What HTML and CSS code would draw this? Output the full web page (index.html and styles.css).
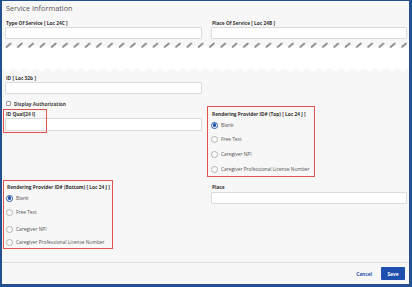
FILE: index.html
```html
<!DOCTYPE html>
<html>
<head>
<meta charset="utf-8">
<link rel="stylesheet" href="styles.css">
</head>
<body>
<div class="frame">
  <div class="content">
    <div class="title">Service Information</div>
    <div class="row2">
      <div class="field">
        <div class="label">Type Of Service [ Loc 24C ]</div>
        <div class="input"></div>
      </div>
      <div class="field">
        <div class="label">Place Of Service [ Loc 24B ]</div>
        <div class="input"></div>
      </div>
    </div>
    <svg class="torn" width="407" height="36" viewBox="0 0 407 36">
      <defs>
        <pattern id="dash" x="3" y="0" width="11.3" height="36" patternUnits="userSpaceOnUse">
          <path d="M1.5 8 L5.5 4.5" stroke="#8c8c8c" stroke-width="1.8" stroke-linecap="round"/>
        </pattern>
        <pattern id="zig" x="0" y="0" width="11.3" height="36" patternUnits="userSpaceOnUse">
          <path d="M0 28.5 L5.65 33 L11.3 28.5 Z" fill="#ffffff"/>
        </pattern>
      </defs>
      <rect x="0" y="7" width="407" height="22" fill="#ffffff"/>
      <rect x="0" y="28" width="407" height="6" fill="url(#zig)"/>
      <rect x="3" y="0" width="404" height="12" fill="url(#dash)"/>
    </svg>
    <div class="cols">
      <div class="col left">
        <div class="field">
          <div class="label">ID [ Loc 32b ]</div>
          <div class="input"></div>
        </div>
        <div class="check-row">
          <span class="checkbox"></span>
          <span class="check-text">Display Authorization</span>
        </div>
        <div class="field qual">
          <div class="label">ID Qual[24 I]</div>
          <div class="input tall"></div>
          <div class="mark"></div>
        </div>
        <div class="group bottom">
          <div class="label">Rendering Provider ID# (Bottom) [ Loc 24 J ]</div>
          <div class="opt o1"><span class="radio on"></span>Blank</div>
          <div class="opt o2"><span class="radio"></span>Free Text</div>
          <div class="opt o3"><span class="radio"></span>Caregiver NPI</div>
          <div class="opt o4"><span class="radio"></span>Caregiver Professional License Number</div>
        </div>
      </div>
      <div class="col right">
        <div class="group top">
          <div class="label">Rendering Provider ID# (Top) [ Loc 24 J ]</div>
          <div class="opt o1"><span class="radio on"></span>Blank</div>
          <div class="opt o2"><span class="radio"></span>Free Text</div>
          <div class="opt o3"><span class="radio"></span>Caregiver NPI</div>
          <div class="opt o4"><span class="radio"></span>Caregiver Professional License Number</div>
        </div>
        <div class="field place">
          <div class="label">Place</div>
          <div class="input"></div>
        </div>
      </div>
    </div>
  </div>
  <div class="footer">
    <span class="cancel">Cancel</span>
    <span class="save">Save</span>
  </div>
</div>
</body>
</html>
```
FILE: styles.css
```css
* { box-sizing: border-box; }
html, body { margin: 0; padding: 0; }
body {
  width: 412px;
  height: 287px;
  overflow: hidden;
  font-family: "Open Sans", "Liberation Sans", sans-serif;
  background: #23508f;
}
.frame {
  width: 412px;
  height: 287px;
  border-style: solid;
  border-color: #23508f;
  border-width: 1px 3px 3px 2px;
  background: #f7f7f7;
  display: flex;
  flex-direction: column;
}
.content {
  flex: 1;
  padding: 2px 2px 0 3px;
  display: flex;
  flex-direction: column;
}
.title {
  font-size: 7.3px;
  line-height: 10px;
  height: 10px;
  color: #555;
  margin-left: 1px;
}
.row2 {
  display: grid;
  grid-template-columns: 197px 196px;
  column-gap: 9px;
  margin-top: 7px;
}
.label {
  font-size: 4.8px;
  font-weight: 700;
  line-height: 6px;
  height: 6px;
  color: #333;
  margin-left: 1px;
  white-space: nowrap;
}
.input {
  margin-top: 1px;
  height: 12px;
  background: #fff;
  border: 1px solid #dadada;
  border-radius: 1px;
}
.input.tall { height: 13px; }
.torn {
  display: block;
  margin-left: -3px;
  flex: none;
}
.cols {
  display: grid;
  grid-template-columns: 197px 196px;
  column-gap: 9px;
}
.col { display: flex; flex-direction: column; align-items: flex-start; }
.col .field { width: 100%; }
.check-row {
  margin-top: 6px;
  height: 7px;
  display: flex;
  align-items: center;
  margin-left: 1px;
}
.checkbox {
  width: 5px;
  height: 5px;
  border: 1px solid #9a9a9a;
  background: #fff;
  border-radius: 1px;
}
.check-text {
  margin-left: 3px;
  font-size: 4.8px;
  font-weight: 700;
  color: #444;
}
.field.qual { margin-top: 4px; position: relative; }
.mark {
  position: absolute;
  left: -2px;
  top: -2px;
  width: 44px;
  height: 24px;
  border: 1px solid #e2524f;
}
.group {
  border: 1px solid #e2524f;
  display: flex;
  flex-direction: column;
}
.group.bottom {
  margin-top: 49px;
  margin-left: -2px;
  width: 110px;
  height: 69px;
  padding: 3px 0 0 2px;
}
.group.top {
  margin-top: 31px;
  margin-left: -4px;
  width: 108px;
  height: 71px;
  padding: 4px 0 0 3px;
}
.opt {
  display: flex;
  align-items: center;
  height: 8px;
  font-size: 4.85px;
  color: #555;
  white-space: nowrap;
}
.radio {
  width: 7px;
  height: 7px;
  border-radius: 50%;
  border: 1px solid #b0b0b0;
  background: #fff;
  margin-right: 3px;
  flex: none;
  display: flex;
  align-items: center;
  justify-content: center;
}
.radio.on { border-color: #2a58b0; }
.radio.on::after {
  content: "";
  width: 3.5px;
  height: 3.5px;
  border-radius: 50%;
  background: #1f4fa8;
}
.bottom .o1 { margin-top: 4px; }
.bottom .o2 { margin-top: 6px; }
.bottom .o3 { margin-top: 9px; }
.bottom .o4 { margin-top: 5px; }
.top .o1 { margin-top: 4px; }
.top .o2 { margin-top: 6px; }
.top .o3 { margin-top: 7px; }
.top .o4 { margin-top: 7px; }
.field.place { margin-top: 7px; }
.field.place .input { margin-top: 2px; }
.footer {
  height: 22px;
  border-top: 1px solid #dcdcdc;
  display: flex;
  align-items: center;
  justify-content: flex-end;
  padding-right: 4px;
  background: #f7f7f7;
}
.cancel {
  font-size: 4.8px;
  font-weight: 700;
  color: #2a55a5;
  margin-right: 9px;
}
.save {
  width: 24px;
  height: 13px;
  background: #1f4fae;
  color: #fff;
  font-size: 4.8px;
  font-weight: 700;
  display: flex;
  align-items: center;
  justify-content: center;
  border-radius: 1px;
}
```
